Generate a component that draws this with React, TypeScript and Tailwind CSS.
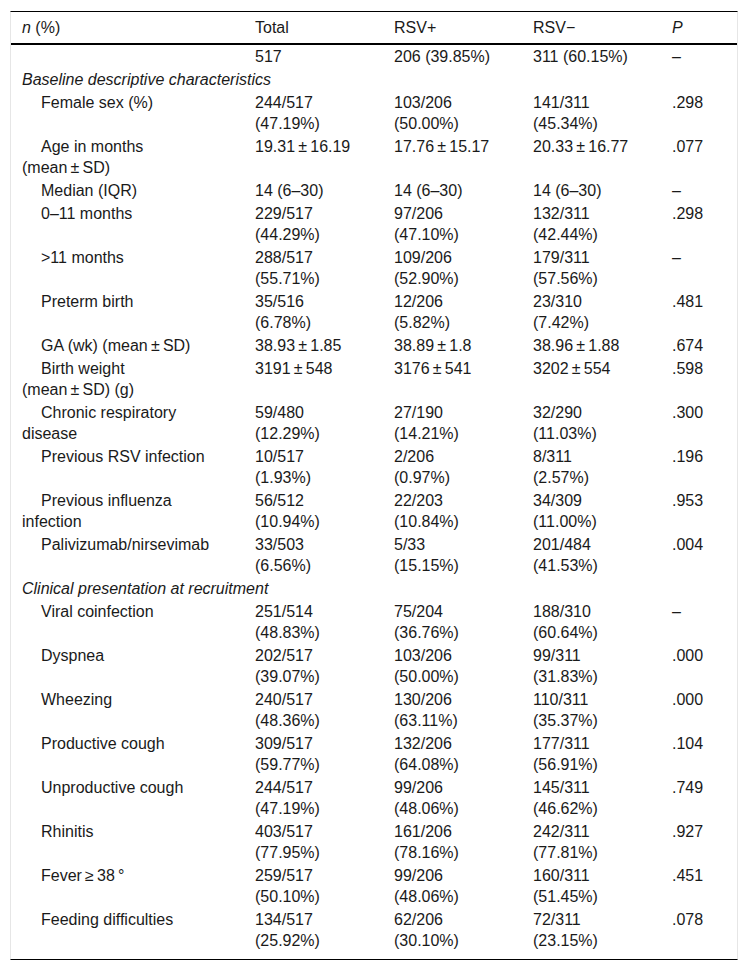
import React from 'react';

type Row =
    | { kind: 'section'; label: string }
    | { kind: 'data'; label: string[]; cells: string[][]; p: string };

const pm = '\u2009±\u2009';

const rows: Row[] = [
    { kind: 'data', label: [''], cells: [['517'], ['206 (39.85%)'], ['311 (60.15%)']], p: '–' },
    { kind: 'section', label: 'Baseline descriptive characteristics' },
    { kind: 'data', label: ['Female sex (%)'], cells: [['244/517', '(47.19%)'], ['103/206', '(50.00%)'], ['141/311', '(45.34%)']], p: '.298' },
    { kind: 'data', label: ['Age in months', `(mean${pm}SD)`], cells: [[`19.31${pm}16.19`], [`17.76${pm}15.17`], [`20.33${pm}16.77`]], p: '.077' },
    { kind: 'data', label: ['Median (IQR)'], cells: [['14 (6–30)'], ['14 (6–30)'], ['14 (6–30)']], p: '–' },
    { kind: 'data', label: ['0–11 months'], cells: [['229/517', '(44.29%)'], ['97/206', '(47.10%)'], ['132/311', '(42.44%)']], p: '.298' },
    { kind: 'data', label: ['>11 months'], cells: [['288/517', '(55.71%)'], ['109/206', '(52.90%)'], ['179/311', '(57.56%)']], p: '–' },
    { kind: 'data', label: ['Preterm birth'], cells: [['35/516', '(6.78%)'], ['12/206', '(5.82%)'], ['23/310', '(7.42%)']], p: '.481' },
    { kind: 'data', label: [`GA (wk) (mean${pm}SD)`], cells: [[`38.93${pm}1.85`], [`38.89${pm}1.8`], [`38.96${pm}1.88`]], p: '.674' },
    { kind: 'data', label: ['Birth weight', `(mean${pm}SD) (g)`], cells: [[`3191${pm}548`], [`3176${pm}541`], [`3202${pm}554`]], p: '.598' },
    { kind: 'data', label: ['Chronic respiratory', 'disease'], cells: [['59/480', '(12.29%)'], ['27/190', '(14.21%)'], ['32/290', '(11.03%)']], p: '.300' },
    { kind: 'data', label: ['Previous RSV infection'], cells: [['10/517', '(1.93%)'], ['2/206', '(0.97%)'], ['8/311', '(2.57%)']], p: '.196' },
    { kind: 'data', label: ['Previous influenza', 'infection'], cells: [['56/512', '(10.94%)'], ['22/203', '(10.84%)'], ['34/309', '(11.00%)']], p: '.953' },
    { kind: 'data', label: ['Palivizumab/nirsevimab'], cells: [['33/503', '(6.56%)'], ['5/33', '(15.15%)'], ['201/484', '(41.53%)']], p: '.004' },
    { kind: 'section', label: 'Clinical presentation at recruitment' },
    { kind: 'data', label: ['Viral coinfection'], cells: [['251/514', '(48.83%)'], ['75/204', '(36.76%)'], ['188/310', '(60.64%)']], p: '–' },
    { kind: 'data', label: ['Dyspnea'], cells: [['202/517', '(39.07%)'], ['103/206', '(50.00%)'], ['99/311', '(31.83%)']], p: '.000' },
    { kind: 'data', label: ['Wheezing'], cells: [['240/517', '(48.36%)'], ['130/206', '(63.11%)'], ['110/311', '(35.37%)']], p: '.000' },
    { kind: 'data', label: ['Productive cough'], cells: [['309/517', '(59.77%)'], ['132/206', '(64.08%)'], ['177/311', '(56.91%)']], p: '.104' },
    { kind: 'data', label: ['Unproductive cough'], cells: [['244/517', '(47.19%)'], ['99/206', '(48.06%)'], ['145/311', '(46.62%)']], p: '.749' },
    { kind: 'data', label: ['Rhinitis'], cells: [['403/517', '(77.95%)'], ['161/206', '(78.16%)'], ['242/311', '(77.81%)']], p: '.927' },
    { kind: 'data', label: ['Fever\u2009≥\u200938\u2009°'], cells: [['259/517', '(50.10%)'], ['99/206', '(48.06%)'], ['160/311', '(51.45%)']], p: '.451' },
    { kind: 'data', label: ['Feeding difficulties'], cells: [['134/517', '(25.92%)'], ['62/206', '(30.10%)'], ['72/311', '(23.15%)']], p: '.078' },
];

const Lines = ({ lines }: { lines: string[] }) => (
    <>
        {lines.map((l, i) => (
            <React.Fragment key={i}>
                {i > 0 && <br />}
                {l}
            </React.Fragment>
        ))}
    </>
);

export default function App() {
    return (
        <div className="bg-white w-[748px] h-[971px] pt-[11px] pl-[10px] font-['Liberation_Sans',Arial,sans-serif] text-[16px] leading-[21px] text-[#1a1a1a]">
            <div className="w-[728px] border-x border-x-[#e6e6e6] border-t border-t-black border-b border-b-black">
                <table className="w-full table-fixed border-collapse">
                    <colgroup>
                        <col className="w-[233px]" />
                        <col className="w-[139px]" />
                        <col className="w-[139px]" />
                        <col className="w-[139px]" />
                        <col className="w-[76px]" />
                    </colgroup>
                    <thead>
                        <tr className="border-b-2 border-black">
                            <th className="pl-[11px] py-[5px] text-left font-normal"><i>n</i> (%)</th>
                            <th className="pl-[11px] py-[5px] text-left font-normal">Total</th>
                            <th className="pl-[11px] py-[5px] text-left font-normal">RSV+</th>
                            <th className="pl-[11px] py-[5px] text-left font-normal">RSV−</th>
                            <th className="pl-[11px] py-[5px] text-left font-normal italic">P</th>
                        </tr>
                    </thead>
                    <tbody>
                        {rows.map((row, i) => {
                            const last = i === rows.length - 1;
                            const pad = last ? 'pt-[1px] pb-[8px]' : 'py-[1px]';
                            if (row.kind === 'section') {
                                return (
                                    <tr key={i}>
                                        <td colSpan={5} className={`pl-[11px] ${pad} italic`}>{row.label}</td>
                                    </tr>
                                );
                            }
                            return (
                                <tr key={i} className="align-top">
                                    <td className={`pl-[11px] ${pad} indent-[19px]`}><Lines lines={row.label} /></td>
                                    {row.cells.map((c, j) => (
                                        <td key={j} className={`pl-[11px] ${pad}`}><Lines lines={c} /></td>
                                    ))}
                                    <td className={`pl-[11px] ${pad}`}>{row.p}</td>
                                </tr>
                            );
                        })}
                    </tbody>
                </table>
            </div>
        </div>
    );
}
